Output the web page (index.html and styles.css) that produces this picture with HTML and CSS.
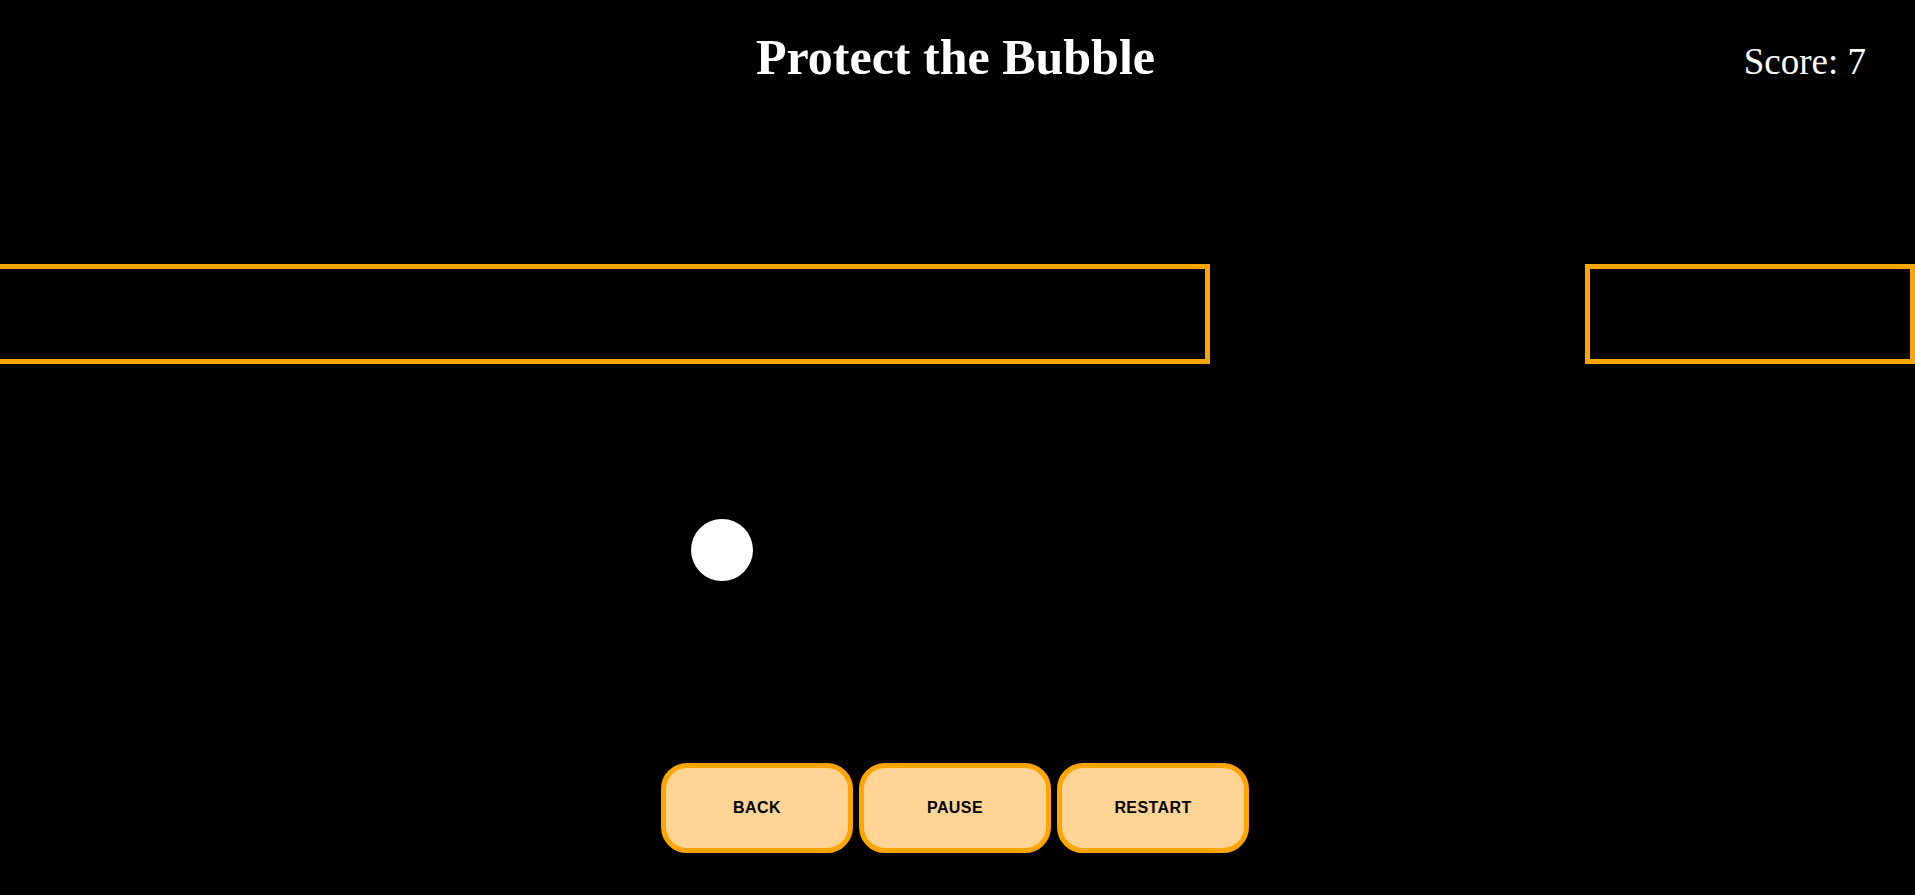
FILE: index.html
```html
<!DOCTYPE html>
<html>
<head>
<meta charset="utf-8">
<title>Protect the Bubble</title>
<link rel="stylesheet" href="styles.css">
</head>
<body>
<div class="game">
  <header class="header">
    <div></div>
    <h1 class="title">Protect the Bubble</h1>
    <div class="score">Score: 7</div>
  </header>
  <div class="field"></div>
  <div class="controls">
    <button class="btn">BACK</button>
    <button class="btn">PAUSE</button>
    <button class="btn">RESTART</button>
  </div>
  <div class="obstacle obstacle-left"></div>
  <div class="obstacle obstacle-right"></div>
  <div class="bubble"></div>
</div>
</body>
</html>
```

FILE: styles.css
```css
html, body {
  margin: 0;
  padding: 0;
  background: #000;
  overflow: hidden;
}

.game {
  position: relative;
  width: 1915px;
  height: 895px;
  font-family: "Liberation Serif", "Times New Roman", serif;
  color: #fff;
}

.header {
  display: grid;
  grid-template-columns: 1fr auto 1fr;
  align-items: baseline;
}

.title {
  margin: 32px 0 0 0;
  font-size: 50px;
  line-height: 50px;
  font-weight: bold;
  text-align: center;
  transform: translateX(-2px);
}

.score {
  justify-self: end;
  margin-right: 49px;
  font-size: 37px;
  line-height: 37px;
}

.field {
  height: 681px;
}

.controls {
  display: flex;
  justify-content: center;
  gap: 6px;
  padding-right: 5px;
}

.btn {
  box-sizing: border-box;
  width: 192px;
  height: 90px;
  border: 5px solid #ffa500;
  border-radius: 26px;
  background: #ffd494;
  color: #000;
  font-family: "Liberation Sans", Arial, sans-serif;
  font-weight: bold;
  font-size: 16px;
  letter-spacing: 0.4px;
  padding: 0;
  cursor: pointer;
}

.obstacle {
  position: absolute;
  box-sizing: border-box;
  top: 264px;
  height: 100px;
  border: 5px solid #ffa500;
}

.obstacle-left {
  left: -5px;
  width: 1215px;
}

.obstacle-right {
  left: 1585px;
  width: 330px;
}

.bubble {
  position: absolute;
  left: 691px;
  top: 519px;
  width: 62px;
  height: 62px;
  border-radius: 50%;
  background: #fff;
}
```
